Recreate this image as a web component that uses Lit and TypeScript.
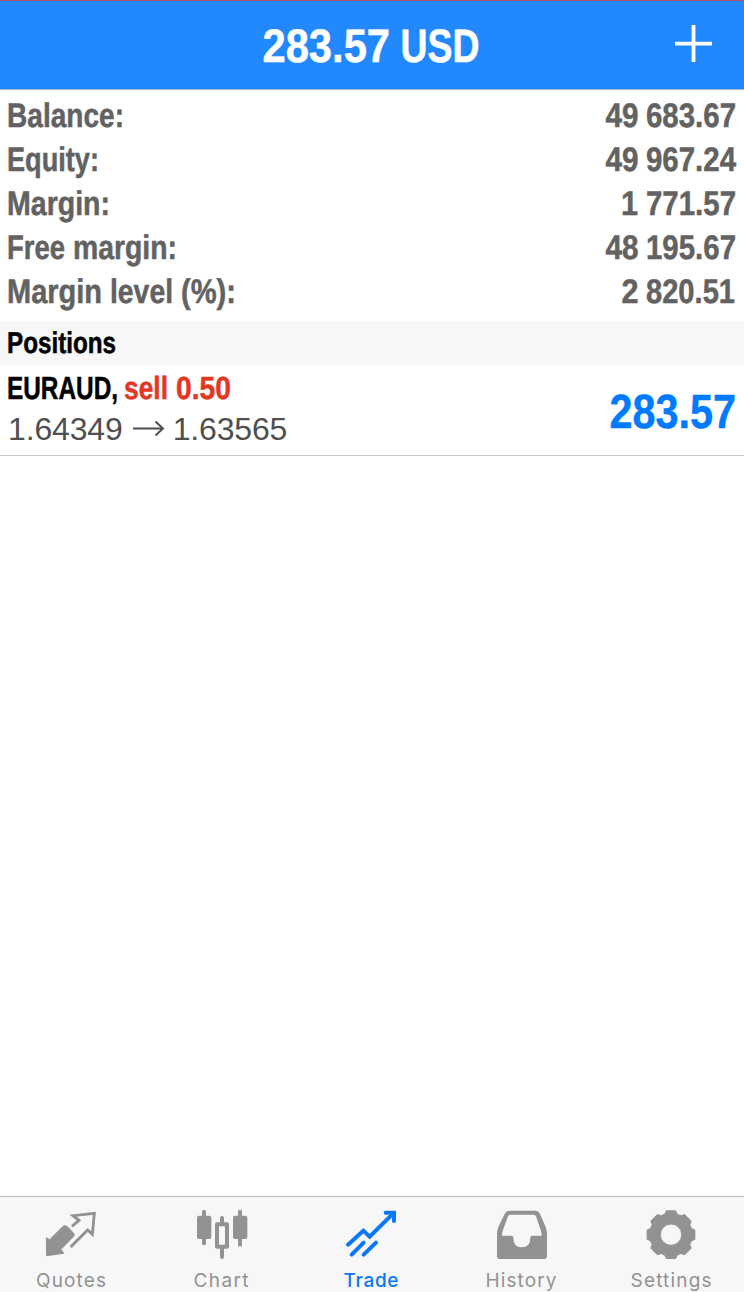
import { LitElement, html, svg, css } from "lit";
import { customElement, property } from "lit/decorators.js";

interface Run {
  text: string;
  x: number;
  width: number;
  tone?: string;
}

const FACE = '"Liberation Sans", Arial, sans-serif';
const ruler = document.createElement("canvas").getContext("2d")!;

/** Horizontal factor that brings a text to the wanted width. */
function squeeze(text: string, size: number, width: number): number {
  ruler.font = `700 ${size}px ${FACE}`;
  return width / ruler.measureText(text).width;
}

/** A line of condensed bold type; every run is squeezed to its own width. */
@customElement("condensed-line")
class CondensedLine extends LitElement {
  @property({ attribute: false }) runs: Run[] = [];
  @property({ type: Number }) size = 34;
  @property({ type: Number }) width = 200;
  @property({ type: Number }) height = 44;
  @property({ type: Number }) baseline = 34;

  static styles = css`
    :host { display: block; }
    svg { display: block; overflow: visible; }
    text {
      font-family: "Liberation Sans", Arial, sans-serif;
      font-weight: 700;
      text-rendering: geometricPrecision;
      fill: currentColor;
      stroke: currentColor;
      stroke-width: 0.5px;
    }
    .sell { fill: #e33725; stroke: #e33725; }
  `;

  render() {
    return html`<svg width=${this.width} height=${this.height}>
      ${this.runs.map(
        (r) => svg`<text class=${r.tone ?? ""} font-size=${this.size}
          transform="translate(${r.x} ${this.baseline}) scale(${squeeze(r.text, this.size, r.width)} 1)">${r.text}</text>`
      )}
    </svg>`;
  }
}

const gearPath = (() => {
  const pts: string[] = [];
  const at = (deg: number, r: number) => {
    const a = (deg * Math.PI) / 180;
    return `${(153 + r * Math.cos(a)).toFixed(1)},${(134 + r * Math.sin(a)).toFixed(1)}`;
  };
  for (let i = 0; i < 8; i++) {
    const c = i * 45;
    pts.push(at(c - 17, 64), at(c - 11, 73), at(c + 11, 73), at(c + 17, 64));
  }
  return `M${pts.join("L")}Z M185,134a32,32 0 1 0 -64,0a32,32 0 1 0 64,0Z`;
})();

const icons: Record<string, unknown> = {
  Quotes: svg`
    <path fill="currentColor" stroke="currentColor" stroke-width="3" stroke-linejoin="round" d="M79 143L89 149L128 110Q135 104 142 110L161 130Q165 135 160 140L123 178L131 190L80 197Z"/>
    <path fill="none" stroke="currentColor" stroke-width="8.5" d="M156 109L177 91L159 77L223 70L217 133L203 120L152 171"/>`,
  Chart: svg`
    <g fill="currentColor">
      <rect x="81" y="77" width="43" height="70" rx="6"/><rect x="96" y="59" width="12" height="107" rx="6"/>
      <rect x="189" y="77" width="43" height="70" rx="6"/><rect x="204" y="59" width="12" height="111" rx="6"/>
      <rect x="150" y="78" width="12" height="26" rx="6"/><rect x="150" y="168" width="12" height="39" rx="6"/>
      <path fill-rule="evenodd" d="M141 97H171Q177 97 177 103V170Q177 176 171 176H141Q135 176 135 170V103Q135 97 141 97ZM149 109Q147 109 147 111V162Q147 164 149 164H163Q165 164 165 162V111Q165 109 163 109Z"/>
    </g>`,
  Trade: svg`
    <g fill="none" stroke="currentColor" stroke-width="12" stroke-linecap="round" stroke-linejoin="round">
      <path stroke-linejoin="miter" d="M84 164L130 122L149 140L219 71"/><path stroke-linejoin="miter" d="M197 68H222V93"/>
      <path d="M95 194L131 158"/><path d="M131 194L168 158"/>
    </g>`,
  History: svg`
    <path fill="currentColor" fill-rule="evenodd" d="M117 62H197Q206 62 209 70L227 111Q231 120 231 131V197Q231 207 221 207H91Q81 207 81 197V131Q81 120 86 109L105 70Q109 62 117 62ZM121 74Q116 74 114 79L99 120Q96 128 96 137H125Q130 137 130 143Q130 172 155 172Q181 172 181 143Q181 137 186 137H215Q215 128 212 120L198 79Q196 74 191 74Z"/>`,
  Settings: svg`<path fill="currentColor" stroke="currentColor" stroke-width="3" stroke-linejoin="round" fill-rule="evenodd" d=${gearPath} />`,
};

@customElement("tab-item")
class TabItem extends LitElement {
  @property() label = "";
  @property({ type: Boolean, reflect: true }) active = false;
  @property({ type: Number }) labelWidth = 60;

  static styles = css`
    :host { display: flex; flex-direction: column; align-items: center; padding-top: 11px; color: #929292; }
    :host([active]) { color: #0a78f5; }
    svg { display: block; }
    text { font-family: Inter, Roboto, sans-serif; font-size: 19px; font-weight: 400; fill: currentColor; }
    :host([active]) text { font-weight: 500; }
  `;

  render() {
    return html`
      <svg width="54" height="54" viewBox="72 54 162 162">${icons[this.label]}</svg>
      <svg width="150" height="30">
        <text x=${75 - this.labelWidth / 2} y="24.7" textLength=${this.labelWidth}>${this.label}</text>
      </svg>
    `;
  }
}

@customElement("app-root")
class AppRoot extends LitElement {
  static styles = css`
    :host {
      display: flex;
      flex-direction: column;
      box-sizing: border-box;
      width: 744px;
      height: 1292px;
      overflow: hidden;
      background: #fff;
      font-family: "Liberation Sans", Arial, sans-serif;
    }
    .header {
      box-sizing: border-box;
      height: 90px;
      display: grid;
      grid-template-columns: 1fr 220px 1fr;
      color: #fff;
      background: #2188fd;
      border-top: 1px solid #b34d72;
      border-bottom: 1px solid #a9b9cc;
    }
    .title { grid-column: 2; }
    .add { grid-column: 3; justify-self: end; margin: 24px 31px 0 0; }
    .summary { padding: 3px 8px 0 8px; height: 228px; color: #626262; }
    .row { display: flex; justify-content: space-between; height: 44px; }
    .section { height: 44px; padding-left: 8px; background: #f7f7f7; color: #000; }
    .position {
      display: flex;
      justify-content: space-between;
      box-sizing: border-box;
      height: 91px;
      padding: 0 8px;
      border-bottom: 1px solid #c9c9c9;
    }
    .symbol { color: #000; }
    .prices { display: flex; color: #4f4f4f; font-size: 32px; letter-spacing: -0.15px; line-height: 36px; margin-top: 2px; }
    .arrow { width: 32px; height: 36px; margin: 0 8px 0 10px; }
    .profit { color: #007aff; }
    .body { flex: 1; }
    .tabs {
      display: grid;
      grid-template-columns: repeat(5, 150px);
      box-sizing: border-box;
      height: 96px;
      background: #f7f7f7;
      border-top: 1px solid #bcbcba;
    }
    .tabs tab-item { margin-left: -4px; margin-right: 4px; }
  `;

  private summary: { label: Run[]; value: Run[] }[] = [
    { label: [{ text: "Balance:", x: -1, width: 117 }], value: [{ text: "49", x: 5.5, width: 33 }, { text: "683.67", x: 46, width: 90 }] },
    { label: [{ text: "Equity:", x: -1, width: 92 }], value: [{ text: "49", x: 5.5, width: 33 }, { text: "967.24", x: 46, width: 90 }] },
    { label: [{ text: "Margin:", x: -1, width: 103 }], value: [{ text: "1", x: 21, width: 17 }, { text: "771.57", x: 46, width: 90 }] },
    { label: [{ text: "Free", x: -1, width: 58 }, { text: "margin:", x: 65, width: 104 }], value: [{ text: "48", x: 5.5, width: 33 }, { text: "195.67", x: 46, width: 90 }] },
    { label: [{ text: "Margin", x: -1, width: 95 }, { text: "level", x: 102, width: 63 }, { text: "(%):", x: 173, width: 55 }], value: [{ text: "2", x: 21.5, width: 17 }, { text: "820.51", x: 46, width: 89 }] },
  ];

  private tabs = [
    { label: "Quotes", width: 70 },
    { label: "Chart", width: 55 },
    { label: "Trade", width: 55 },
    { label: "History", width: 71 },
    { label: "Settings", width: 81 },
  ];

  render() {
    return html`
      <div class="header">
        <condensed-line class="title" .runs=${[{ text: "283.57", x: 0.5, width: 127.5 }, { text: "USD", x: 138.5, width: 79 }]}
          .size=${47} .width=${220} .height=${88} .baseline=${61}></condensed-line>
        <svg class="add" width="38" height="38"><path d="M0 18.7H37M18.5 0V37" stroke="#fff" stroke-width="3.8"/></svg>
      </div>
      <div class="summary">
        ${this.summary.map(
          (s) => html`<div class="row">
            <condensed-line .runs=${s.label} .width=${240} .baseline=${33.5}></condensed-line>
            <condensed-line .runs=${s.value} .width=${136} .baseline=${33.5}></condensed-line>
          </div>`
        )}
      </div>
      <div class="section">
        <condensed-line .runs=${[{ text: "Positions", x: -1, width: 109 }]} .size=${30} .baseline=${32.4}></condensed-line>
      </div>
      <div class="position">
        <div>
          <condensed-line class="symbol" .size=${32} .baseline=${33.5}
            .runs=${[
              { text: "EURAUD,", x: -1, width: 111 },
              { text: "sell", x: 116, width: 44, tone: "sell" },
              { text: "0.50", x: 168, width: 55, tone: "sell" },
            ]}></condensed-line>
          <div class="prices">
            <span>1.64349</span>
            <svg class="arrow" viewBox="0 0 32 36"><path d="M0 17.5H30M22.5 10.5L30 17.5L22.5 24.5" fill="none" stroke="currentColor" stroke-width="2"/></svg>
            <span>1.63565</span>
          </div>
        </div>
        <condensed-line class="profit" .runs=${[{ text: "283.57", x: 0.5, width: 126.5 }]}
          .size=${48} .width=${127} .height=${90} .baseline=${63}></condensed-line>
      </div>
      <div class="body"></div>
      <div class="tabs">
        ${this.tabs.map((t) => html`<tab-item .label=${t.label} .labelWidth=${t.width} ?active=${t.label === "Trade"}></tab-item>`)}
      </div>
    `;
  }
}
